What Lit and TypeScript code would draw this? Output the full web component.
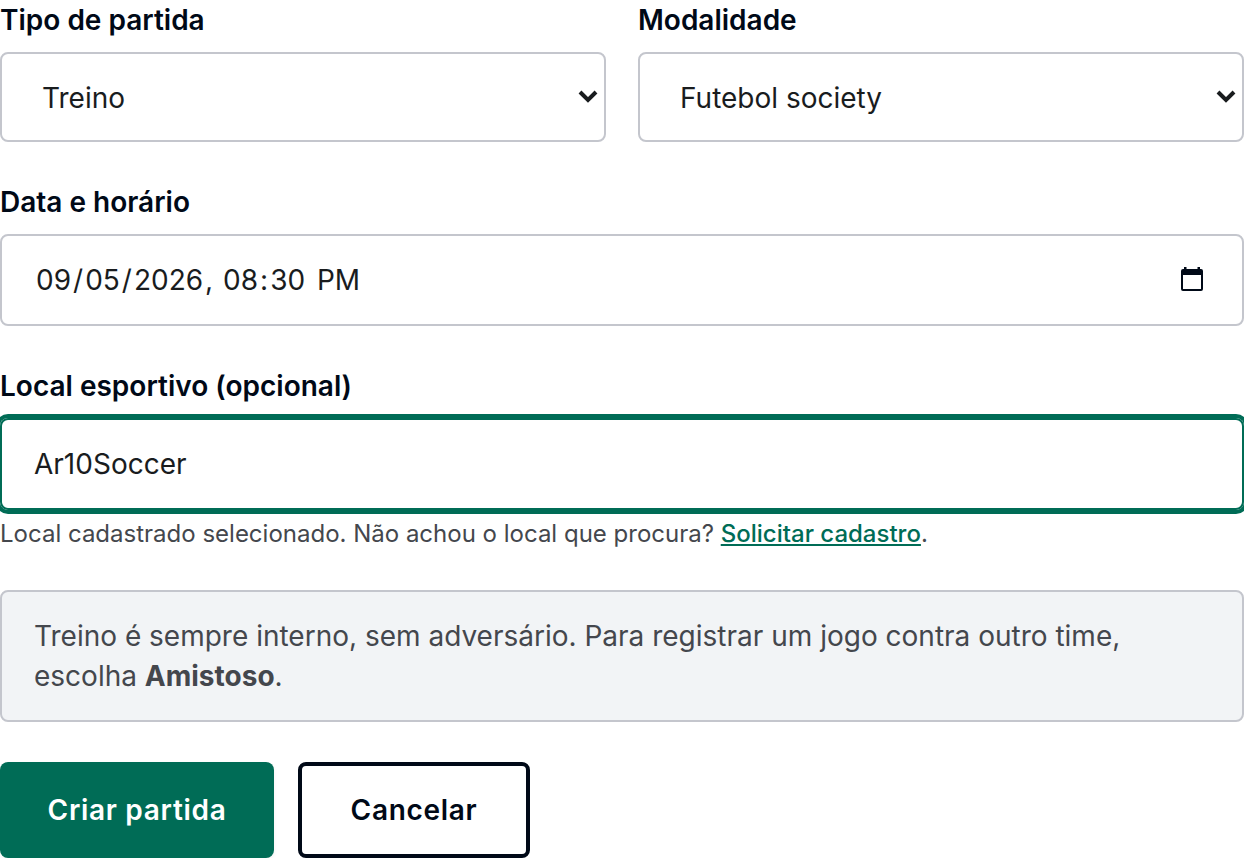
import { LitElement, html, css } from 'lit';
import { customElement, property } from 'lit/decorators.js';

@customElement('select-box')
export class SelectBox extends LitElement {
  @property() label = '';
  @property() value = '';

  static styles = css`
    :host {
      display: block;
      flex: 1;
    }
    .label {
      font-size: 28px;
      font-weight: 600;
      line-height: 40px;
      margin-bottom: 12px;
      color: #000917;
    }
    .box {
      display: flex;
      align-items: center;
      justify-content: space-between;
      box-sizing: border-box;
      height: 90px;
      padding: 0 6px 0 40px;
      border: 2px solid #c4c6cd;
      border-radius: 8px;
      background: #ffffff;
      font-size: 28px;
      color: #191c1e;
    }
    .value {
      padding-top: 2px;
    }
    svg {
      display: block;
    }
  `;

  render() {
    return html`
      <div class="label">${this.label}</div>
      <div class="box">
        <span class="value">${this.value}</span>
        <svg width="20" height="14" viewBox="0 0 20 14">
          <path d="M2 2 L10 10 L18 2" fill="none" stroke="#191c1e" stroke-width="4" />
        </svg>
      </div>
    `;
  }
}

@customElement('app-root')
export class AppRoot extends LitElement {
  static styles = css`
    :host {
      display: block;
      box-sizing: border-box;
      height: 858px;
      overflow: hidden;
      background: #ffffff;
      font-family: Inter, 'Liberation Sans', sans-serif;
      color: #191c1e;
    }
    .row {
      display: flex;
      gap: 32px;
    }
    .field {
      margin-top: 40px;
    }
    .label {
      font-size: 28px;
      font-weight: 600;
      line-height: 40px;
      margin-bottom: 12px;
      color: #000917;
    }
    .input {
      display: flex;
      align-items: center;
      justify-content: space-between;
      box-sizing: border-box;
      height: 92px;
      padding: 0 38px 0 32px;
      border: 2px solid #c4c6cd;
      border-radius: 8px;
      font-size: 28px;
    }
    .date {
      white-space: pre;
    }
    .part {
      padding: 0 2px;
    }
    .calendar {
      display: block;
      margin-bottom: 2px;
    }
    .focused {
      padding: 0 32px;
      border-color: #006c56;
      box-shadow: 0 0 0 4px #006c56;
    }
    .hint {
      margin-top: 8px;
      font-size: 24px;
      line-height: 32px;
      color: #44474d;
    }
    .hint a {
      color: #006c56;
      font-weight: 500;
      text-decoration: underline;
    }
    .notice {
      box-sizing: border-box;
      height: 132px;
      margin-top: 40px;
      padding: 24px 32px;
      border: 2px solid #c4c6cd;
      border-radius: 8px;
      background: #f2f4f6;
      font-size: 28px;
      line-height: 40px;
      color: #44474d;
    }
    .actions {
      display: flex;
      gap: 24px;
      margin-top: 40px;
    }
    button {
      box-sizing: border-box;
      height: 96px;
      padding: 0;
      border: 4px solid #000917;
      border-radius: 8px;
      background: #ffffff;
      font-family: inherit;
      font-size: 28px;
      font-weight: 600;
      letter-spacing: 0.7px;
      color: #000917;
      width: 232px;
    }
    .primary {
      width: 274px;
      border: none;
      background: #006c56;
      box-shadow: 0 2px 4px rgba(0, 0, 0, 0.05);
      color: #ffffff;
    }
  `;

  render() {
    return html`
      <div class="row">
        <select-box label="Tipo de partida" value="Treino"></select-box>
        <select-box label="Modalidade" value="Futebol society"></select-box>
      </div>
      <div class="field">
        <div class="label">Data e horário</div>
        <div class="input">
          <div class="date"><span class="part">09</span>/<span class="part">05</span>/<span class="part">2026</span>, <span class="part">08</span>:<span class="part">30</span> <span class="part">PM</span></div>
          <svg class="calendar" width="24" height="26" viewBox="0 0 24 26">
            <path d="M4 1 h2.5 v2 h11 v-2 H20 v2 h1 a2 2 0 0 1 2 2 V23 a2 2 0 0 1 -2 2 H3 a2 2 0 0 1 -2 -2 V5 a2 2 0 0 1 2 -2 h1 Z M3 9 V23 H21 V9 Z" fill="#000917" fill-rule="evenodd" />
          </svg>
        </div>
      </div>
      <div class="field">
        <div class="label">Local esportivo (opcional)</div>
        <div class="input focused"><span>Ar10Soccer</span></div>
        <div class="hint">
          Local cadastrado selecionado. Não achou o local que procura? <a>Solicitar cadastro</a>.
        </div>
      </div>
      <div class="notice">
        Treino é sempre interno, sem adversário. Para registrar um jogo contra outro time, escolha
        <strong>Amistoso</strong>.
      </div>
      <div class="actions">
        <button class="primary">Criar partida</button>
        <button>Cancelar</button>
      </div>
    `;
  }
}
